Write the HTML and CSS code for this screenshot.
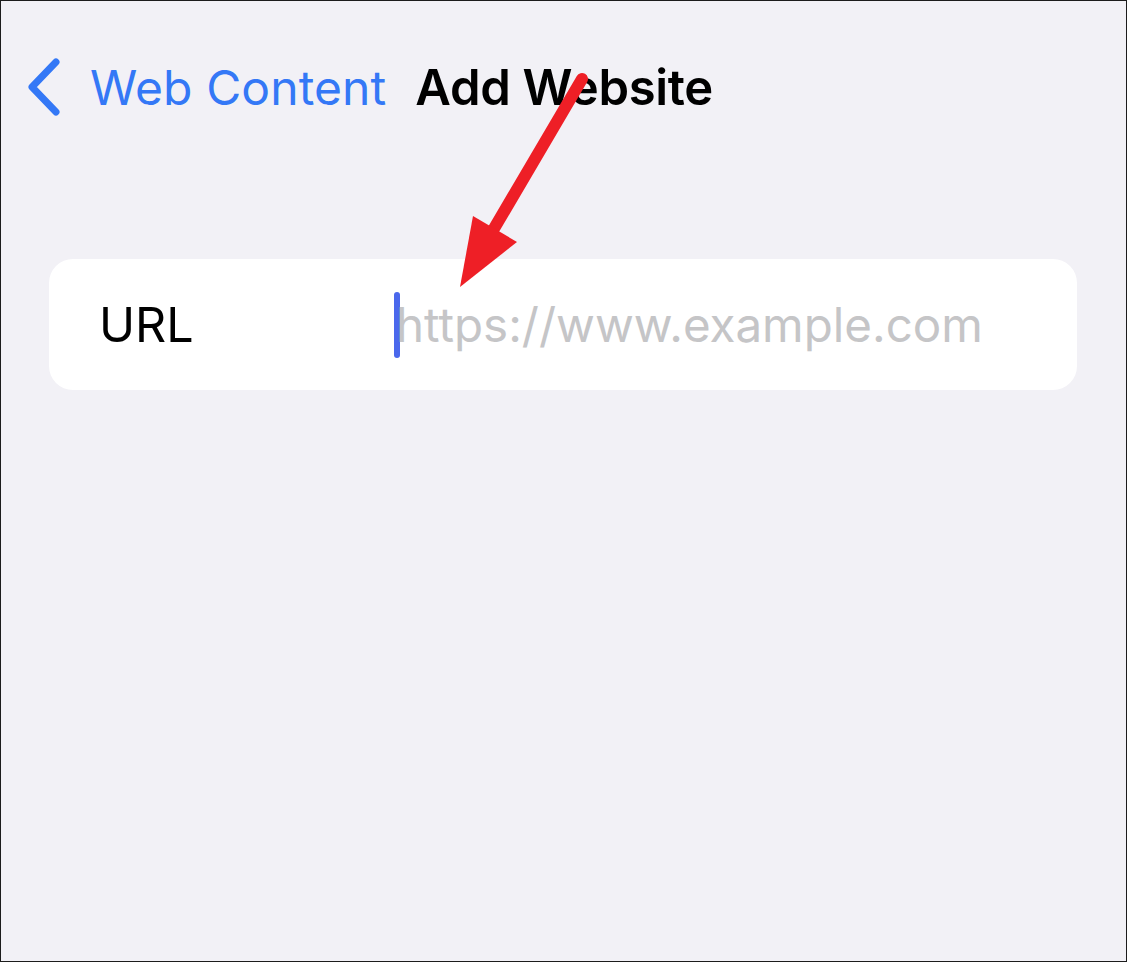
FILE: index.html
```html
<!DOCTYPE html>
<html lang="en">
<head>
  <meta charset="UTF-8">
  <meta name="viewport" content="width=device-width, initial-scale=1.0">
  <title>Add Website</title>
  <link rel="stylesheet" href="styles.css">
</head>
<body>
  <div class="screen">
    <div class="navbar">
      <a href="#" class="back">
        <svg class="chevron" width="34" height="58" viewBox="0 0 34 58">
          <path d="M29 4 L5 29 L29 54" fill="none" stroke="#3478f6" stroke-width="7" stroke-linecap="round" stroke-linejoin="round"/>
        </svg>
        <span class="back-label">Web Content</span>
      </a>
      <h1 class="title">Add Website</h1>
    </div>

    <div class="card">
      <div class="label">URL</div>
      <div class="field">
        <span class="caret"></span>
        <span class="placeholder">https://www.example.com</span>
      </div>
    </div>

    <!-- annotation arrow -->
    <svg class="arrow" width="1127" height="962" viewBox="0 0 1127 962">
      <line x1="582" y1="79" x2="492" y2="232" stroke="#ee1f26" stroke-width="12" stroke-linecap="round"/>
      <polygon points="473,216 517,242 460,287" fill="#ee1f26"/>
    </svg>
  </div>
</body>
</html>
```

FILE: styles.css
```css
body {
  margin: 0;
  padding: 0;
  font-family: 'Inter', 'Liberation Sans', sans-serif;
}
.screen {
  position: relative;
  width: 1127px;
  height: 962px;
  box-sizing: border-box;
  background: #f2f1f6;
  border: 1px solid #1c1c1c;
  overflow: hidden;
}
.navbar {
  display: flex;
  align-items: center;
  height: 58px;
  margin-top: 57px;
  padding-left: 26px;
}
.back {
  display: flex;
  align-items: center;
  text-decoration: none;
  color: #3478f6;
}
.chevron {
  display: block;
}
.back-label {
  margin-left: 29px;
  font-size: 48px;
  letter-spacing: 0.1px;
}
.title {
  margin: 0 0 0 29px;
  font-size: 49px;
  font-weight: 600;
  color: #000;
  letter-spacing: -0.3px;
}
.card {
  display: flex;
  align-items: center;
  margin: 143px 49px 0 48px;
  height: 131px;
  background: #ffffff;
  border-radius: 24px;
}
.label {
  width: 295px;
  padding-left: 50px;
  font-size: 48.5px;
  color: #000;
}
.field {
  display: flex;
  align-items: center;
}
.caret {
  width: 6px;
  height: 66px;
  border-radius: 3px;
  background: #4a68ec;
}
.placeholder {
  font-size: 47.5px;
  color: #c5c5c7;
  margin-left: -4px;
}
.arrow {
  position: absolute;
  left: -1px;
  top: -1px;
  pointer-events: none;
}
```
